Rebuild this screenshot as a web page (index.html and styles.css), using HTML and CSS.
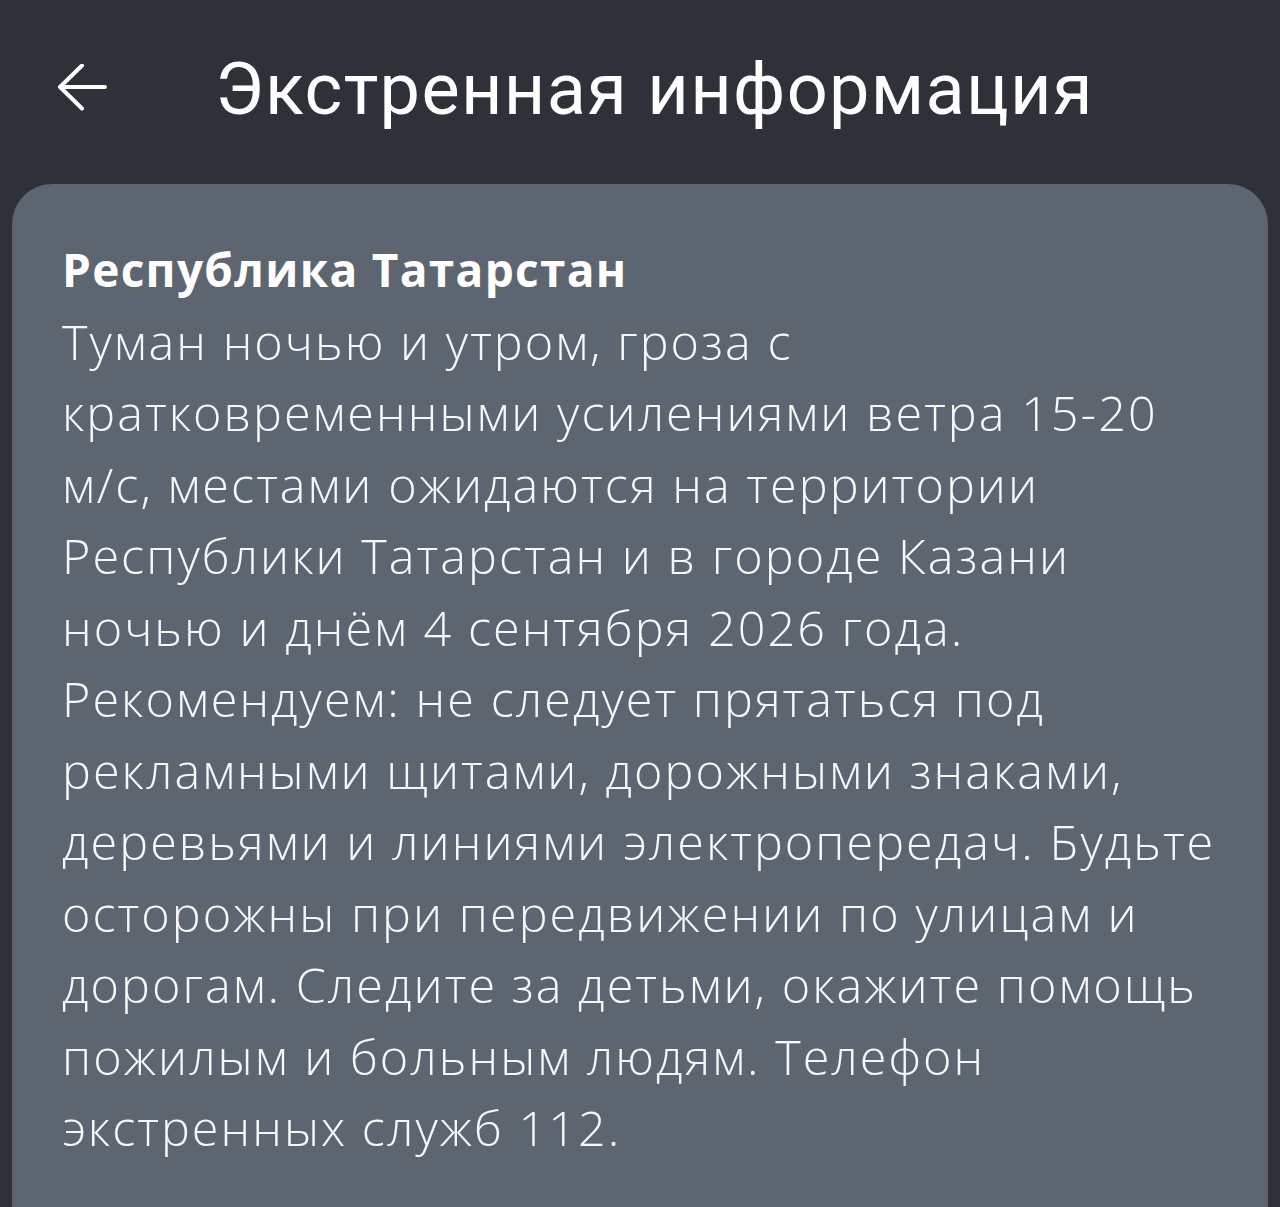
FILE: index.html
```html
<!DOCTYPE html>
<html lang="ru">
<head>
<meta charset="utf-8">
<title>Экстренная информация</title>
<link rel="stylesheet" href="styles.css">
</head>
<body>
<header class="topbar">
  <button class="back" aria-label="Назад">
    <svg viewBox="0 0 50 50" width="50" height="50"><path d="M48 23H3M25 1.5L3 23l22 21.5" fill="none" stroke="#fff" stroke-width="4" stroke-linecap="round" stroke-linejoin="round"/></svg>
  </button>
  <h1 class="title">Экстренная информация</h1>
</header>
<main class="card">
  <h2 class="region">Республика Татарстан</h2>
  <p class="message">Туман ночью и утром, гроза с кратковременными усилениями ветра 15-20 м/с, местами ожидаются на территории Республики Татарстан и в городе Казани ночью и днём 4 сентября 2026 года. Рекомендуем: не следует прятаться под рекламными щитами, дорожными знаками, деревьями и линиями электропередач. Будьте осторожны при передвижении по улицам и дорогам. Следите за детьми, окажите помощь пожилым и больным людям. Телефон экстренных служб 112.</p>
</main>
</body>
</html>
```
FILE: styles.css
```css
html, body {
  margin: 0;
  padding: 0;
  background: #2f3139;
  height: 1207px;
  overflow: hidden;
}
body {
  font-family: "Open Sans", "Noto Sans", sans-serif;
  color: #fff;
}
.topbar {
  height: 184px;
  display: flex;
  align-items: center;
  padding-left: 57px;
  box-sizing: border-box;
}
.back {
  background: none;
  border: 0;
  padding: 0;
  width: 50px;
  height: 50px;
  display: flex;
  margin-top: -6px;
}
.title {
  margin: 0 0 0 108px;
  font-family: Roboto, "Noto Sans", sans-serif;
  font-weight: 400;
  font-size: 72px;
  letter-spacing: 1.35px;
  line-height: 1;
  margin-top: -4px;
}
.card {
  margin: 0 12px;
  background: #5d6570;
  border-radius: 40px 40px 0 0;
  padding: 50px 48px 0 50px;
  height: 1023px;
  box-sizing: border-box;
}
.region {
  margin: 0;
  font-size: 46px;
  font-weight: 700;
  line-height: 71.5px;
  letter-spacing: 1.3px;
}
.message {
  margin: 0;
  font-size: 48.5px;
  font-weight: 300;
  line-height: 71.5px;
  letter-spacing: 2.05px;
  color: #f7f8f9;
  word-break: keep-all;
  overflow-wrap: normal;
}
```
